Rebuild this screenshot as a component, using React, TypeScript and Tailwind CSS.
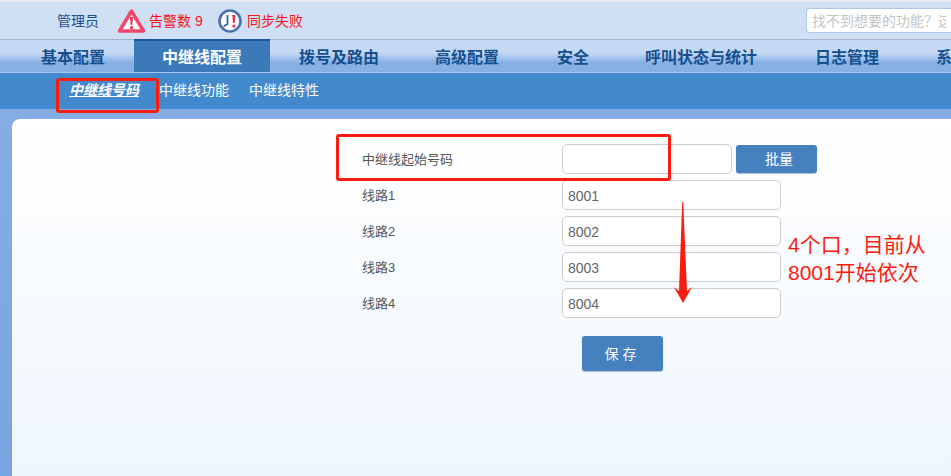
import { useState } from "react";

const cjk = "font-['Liberation_Sans','Noto_Sans_CJK_SC',sans-serif]";

const navItems = [
  { label: "基本配置", width: "w-[122px]" },
  { label: "中继线配置", width: "w-[136px]", active: true },
  { label: "拨号及路由", width: "w-[138px]" },
  { label: "高级配置", width: "w-[118px]" },
  { label: "安全", width: "w-[94px]" },
  { label: "呼叫状态与统计", width: "w-[162px]" },
  { label: "日志管理", width: "w-[130px]" },
  { label: "系统", width: "w-[80px]" },
];

const lines = [
  { label: "线路1", value: "8001" },
  { label: "线路2", value: "8002" },
  { label: "线路3", value: "8003" },
  { label: "线路4", value: "8004" },
];

function AlarmIcon() {
  return (
    <svg width="29" height="26" viewBox="0 0 29 26">
      <path d="M14.5 3 L26.5 23 L2.5 23 Z" fill="#fff" stroke="#f0486a" strokeWidth="3.5" strokeLinejoin="round" />
      <path d="M13 9 h3 l-.7 8 h-1.6 Z" fill="#e8304f" />
      <circle cx="14.5" cy="19.5" r="1.6" fill="#e8304f" />
    </svg>
  );
}

function ClockIcon() {
  return (
    <svg width="26" height="26" viewBox="0 0 26 26">
      <circle cx="13" cy="13" r="10.5" fill="#fff" stroke="#4c70a8" strokeWidth="2.6" />
      <path d="M10.5 7 V16 L6.5 18.5" fill="none" stroke="#3f5f96" strokeWidth="1.8" />
      <path d="M15.3 7 h3.2 l-.7 8 h-1.8 Z" fill="#e8304f" />
      <circle cx="16.9" cy="18" r="1.6" fill="#e8304f" />
    </svg>
  );
}

export default function App() {
  const [values, setValues] = useState(lines.map((l) => l.value));

  return (
    <div className={`relative h-[476px] w-[951px] overflow-hidden bg-gradient-to-b from-[#8ab0e6] to-[#78a4df] ${cjk}`}>
      {/* top bar */}
      <div className="flex h-[40px] items-center border-t-2 border-b border-t-[#e9eaec] border-b-[#a3b3cb] bg-[#cfe0f5] pl-[57px] text-sm">
        <span className="w-[60px] text-[#1c4c8c]">管理员</span>
        <AlarmIcon />
        <span className="ml-[3px] w-[68px] text-[#fb0f14]">告警数 9</span>
        <ClockIcon />
        <span className="ml-[4px] text-[#fb0f14]">同步失败</span>
        <input
          placeholder="找不到想要的功能？这里搜索"
          className="ml-auto h-[25px] w-[145px] rounded-l-[3px] border border-r-0 border-[#a9c8ee] bg-white px-[5px] text-sm text-gray-500 placeholder:text-[#c4c4c4]"
        />
      </div>

      {/* main nav */}
      <div className="flex h-[32px] bg-gradient-to-b from-[#c6d9f4] from-40% to-[#88b0e5] to-70% pl-[12px]">
        {navItems.map((item) => (
          <div
            key={item.label}
            className={`flex shrink-0 items-center justify-center text-base font-bold ${item.width} ${
              item.active
                ? "-mt-px border-t-2 border-t-[#1d559f] bg-[#3b79b9] pt-[3px] text-white"
                : "pt-[4px] text-[#15508f]"
            }`}
          >
            {item.label}
          </div>
        ))}
      </div>

      {/* sub nav */}
      <div className="flex h-[37px] items-center border-t border-t-[#a9c6ec] bg-[#4389ce] pb-[2px] pl-[69px] text-sm text-white">
        <span className="w-[90px] font-bold italic underline">中继线号码</span>
        <span className="w-[90px]">中继线功能</span>
        <span>中继线特性</span>
      </div>

      {/* content panel */}
      <div className="ml-[12px] mt-[10px] h-[357px] rounded-tl-[8px] bg-gradient-to-b from-white to-[#eff6fe] pl-[350px] pt-[25px] text-[13px] text-[#555]">
        <div className="flex h-[30px] items-center">
          <label className="w-[200px] pt-[2px]">中继线起始号码</label>
          <input className="h-[30px] w-[170px] rounded-[5px] border border-[#ccc] bg-white" />
          <button className="ml-[4px] h-[28px] w-[81px] rounded-[3px] bg-[#4580bf] pl-[5px] text-sm text-white shadow-[0_1px_1px_#a9bcd4]">
            批量
          </button>
        </div>

        <div className="mt-[6px] flex flex-col gap-[6px]">
          {lines.map((line, i) => (
            <div key={line.label} className="flex h-[30px] items-center">
              <label className="w-[200px] pt-[2px]">{line.label}</label>
              <input
                value={values[i]}
                onChange={(e) => setValues(values.map((v, j) => (j === i ? e.target.value : v)))}
                className="h-[30px] w-[219px] rounded-[5px] border border-[#ccc] bg-white px-[5px] pt-[2px] text-sm text-[#666]"
              />
            </div>
          ))}
        </div>

        <button className="ml-[220px] mt-[18px] h-[35px] w-[81px] rounded-[3px] bg-[#4580bf] text-sm tracking-[4px] text-white shadow-[0_1px_1px_#a9bcd4]">
          保存
        </button>
      </div>

      {/* red markup on top of the screenshot */}
      <div className="absolute left-[56px] top-[78px] h-[35px] w-[103px] rounded-[3px] border-[3px] border-[#fb1c10]" />
      <div className="absolute left-[336px] top-[134px] h-[47px] w-[335px] rounded-[3px] border-[3px] border-[#fb1c10]" />
      <svg className="absolute left-[672px] top-[200px]" width="22" height="105" viewBox="0 0 22 105">
        <path d="M10.2 2 L11.2 2 L15 91 L20 87 L11 103 L2 87 L7 91 Z" fill="#fb1c10" />
      </svg>
      <div className="absolute left-[788px] top-[231px] text-[21px] leading-[28px] text-[#fb1c10]">
        4个口，目前从
        <br />
        8001开始依次
      </div>
    </div>
  );
}
